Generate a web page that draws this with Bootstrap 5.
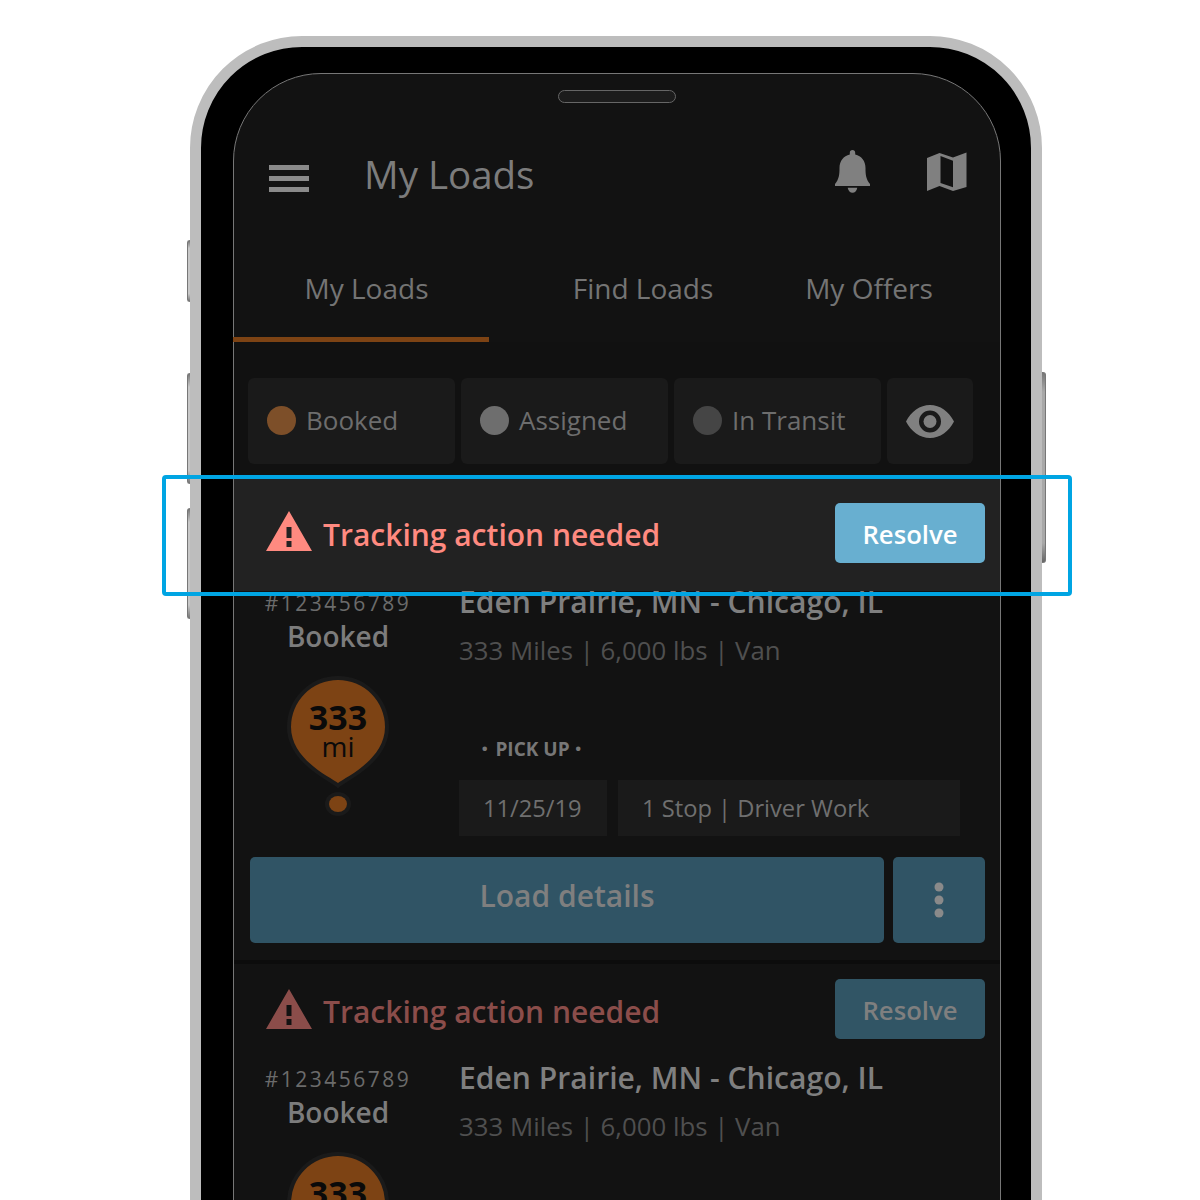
<!DOCTYPE html>
<html lang="en">
<head>
    <meta charset="UTF-8">
    <meta name="viewport" content="width=device-width, initial-scale=1.0">
    <title>My Loads</title>
    <link href="https://cdn.jsdelivr.net/npm/bootstrap@5.3.0/dist/css/bootstrap.min.css" rel="stylesheet">
    <style>
        html, body {
            height: 1200px;
            overflow: hidden;
            background: #fff;
        }
        body {
            font-family: "Open Sans", "Liberation Sans", sans-serif;
        }
        .stage {
            position: relative;
            width: 1200px;
            height: 1200px;
            overflow: hidden;
            padding: 36px 158px 0 190px;
        }
        /* side buttons of the phone */
        .side-key {
            position: absolute;
            width: 4px;
            border: 1px solid #777;
        }
        .key-a, .key-b, .key-c {
            left: 187px;
            border-right: 0;
            border-radius: 3px 0 0 3px;
            background: linear-gradient(180deg, #777, #c8c8c8 12%, #c8c8c8 88%, #777);
        }
        .key-a { top: 240px; height: 62px; }
        .key-b { top: 373px; height: 111px; }
        .key-c { top: 508px; height: 111px; }
        .key-d {
            left: 1041px;
            top: 372px;
            width: 5px;
            height: 191px;
            border-left: 0;
            border-radius: 0 3px 3px 0;
            background: linear-gradient(180deg, #777, #a8a8a8 10%, #a8a8a8 90%, #666);
        }

        .phone-shell {
            position: relative;
            height: 1300px;
            background: #000;
            border: 11px solid #bdbdbd;
            border-radius: 112px 112px 0 0;
            padding: 26px 30px 0 32px;
        }
        .phone-screen {
            height: 1300px;
            background: #121212;
            border: 1px solid #777;
            border-radius: 88px 88px 0 0;
        }
        .speaker {
            width: 118px;
            height: 13px;
            margin-top: 16px;
            background: #1c1c1c;
            border: 1px solid #666;
            border-radius: 7px;
        }
        .top-bar {
            height: 92px;
            margin-top: 27px;
            padding: 0 33px 0 35px;
        }
        .page-title {
            margin: 0 0 4px 55px;
            font-size: 38.5px;
            font-weight: 400;
            color: #7c7c7c;
        }
        .menu-icon { margin-top: 5px; }
        .bell-icon { margin: 0 57px 10px 0; }
        .map-icon { margin-bottom: 8px; }

        .tab-row {
            height: 120px;
            padding-top: 15px;
        }
        .tab-row .nav-link {
            height: 105px;
            padding: 32px 0 0;
            text-align: center;
            font-size: 28px;
            line-height: 38px;
            color: #747474;
            border-bottom: 5px solid transparent;
        }
        .tab-row .tab-one {
            width: 256px;
            margin-left: -1px;
            padding-left: 11px;
            border-bottom-color: #7d4314;
        }
        .tab-two { width: 308px; }
        .tab-three { width: 144px; white-space: nowrap; }

        .filter-row {
            gap: 6px;
            padding: 36px 0 23px 14px;
            background: #111;
        }
        .filter-chip {
            width: 207px;
            height: 86px;
            padding: 0 0 2px 19px;
            gap: 10px;
            font-size: 26px;
            color: #6d6d6d;
            background: #1a1a1a;
            border-radius: 6px;
        }
        .eye-chip {
            width: 86px;
            padding: 0;
        }
        .status-dot {
            width: 29px;
            height: 29px;
            border-radius: 50%;
        }
        .dot-booked { background: #7d4f29; }
        .dot-assigned { background: #6e6e6e; }
        .dot-transit { background: #454545; }

        .load-card {
            padding: 15px 15px 17px 14px;
            border-bottom: 4px solid #0c0c0c;
            background: #121212;
        }
        .tracking-row {
            height: 60px;
            margin-bottom: 17px;
            padding-left: 18px;
        }
        .tracking-text {
            margin-left: 11px;
            padding-top: 5px;
            font-size: 30px;
            font-weight: 600;
            color: #8b4d4a;
        }
        .tracking-icon { fill: #8b4d4a; }
        .resolve-btn {
            width: 150px;
            height: 60px;
            padding: 4px 0 0;
            font-size: 25.7px;
            font-weight: 600;
            color: #7f7f7f;
            background: #315565;
            border: 0;
            border-radius: 5px;
        }

        /* the highlighted copy of the row lies over the card below it */
        .tracking-lit {
            position: relative;
            z-index: 2;
            height: 112px;
            margin: -23px -15px -11px -14px;
            padding: 0 15px 4px 32px;
            background: #222;
        }
        .tracking-lit .tracking-text { padding-top: 2px; color: #ff8a80; }
        .tracking-lit .tracking-icon { fill: #ff8a80; margin-top: -5px; }
        .tracking-lit .resolve-btn { color: #fff; background: #68afd0; }
        .highlight-box {
            position: absolute;
            left: -72px;
            right: -72px;
            top: -4px;
            bottom: -5px;
            border: 4px solid #00a5e3;
            border-radius: 4px;
        }

        .left-col {
            width: 180px;
            flex: none;
            padding-top: 2px;
            text-align: center;
        }
        .load-number {
            font-size: 21px;
            line-height: 42px;
            letter-spacing: 2.5px;
            color: #6b6b6b;
        }
        .load-status {
            margin-top: -6px;
            font-size: 28px;
            line-height: 36px;
            font-weight: 600;
            color: #7c7c7c;
        }
        .pin-wrap {
            position: relative;
            width: 104px;
            height: 142px;
            margin: 21px auto 0;
        }
        .pin-text {
            position: absolute;
            left: 0;
            right: 0;
            top: 26px;
            color: #0a0a0a;
        }
        .pin-miles {
            font-size: 34px;
            line-height: 32px;
            font-weight: 700;
        }
        .pin-unit {
            font-size: 28px;
            line-height: 26px;
        }
        .main-col {
            flex: 1;
            margin-left: 31px;
            padding-top: 1px;
        }
        .route-name {
            font-size: 30.1px;
            line-height: 42px;
            font-weight: 600;
            color: #7f7f7f;
        }
        .route-meta {
            margin-top: 9px;
            font-size: 25.8px;
            line-height: 36px;
            color: #4f4f4f;
        }
        .pick-label {
            margin: 68px 0 18px 22px;
            font-size: 19px;
            line-height: 26px;
            font-weight: 700;
            color: #777;
        }
        .pick-dot {
            margin: 0 7px 0 0;
            font-size: 26px;
            line-height: 0;
            vertical-align: -2px;
        }
        .pick-dot-end { margin: 0 0 0 5px; }
        .pick-chips { gap: 11px; }
        .info-chip {
            height: 56px;
            line-height: 56px;
            padding-left: 24px;
            font-size: 23.7px;
            color: #6f6f6f;
            background: #1a1a1a;
        }
        .chip-date { width: 148px; }
        .chip-stops { width: 342px; }
        .action-row {
            gap: 9px;
            margin: 21px 0 0 2px;
        }
        .details-btn {
            width: 634px;
            height: 86px;
            padding: 0 0 9px;
            font-size: 30px;
            font-weight: 600;
            color: #7f7f7f;
            background: #305465;
            border: 0;
            border-radius: 5px;
        }
        .more-btn {
            width: 92px;
            height: 86px;
            padding: 0;
            background: #305465;
            border: 0;
            border-radius: 5px;
        }
    </style>
</head>
<body>
    <div class="stage">
        <span class="side-key key-a"></span>
        <span class="side-key key-b"></span>
        <span class="side-key key-c"></span>
        <span class="side-key key-d"></span>

        <div class="phone-shell">
            <div class="phone-screen">
                <div class="d-flex justify-content-center">
                    <div class="speaker"></div>
                </div>

                <!-- header -->
                <div class="top-bar d-flex align-items-center">
                    <svg class="menu-icon" width="40" height="27" viewBox="0 0 40 27" fill="#8a8a8a">
                        <rect y="0" width="40" height="5"/>
                        <rect y="11" width="40" height="5"/>
                        <rect y="22" width="40" height="5"/>
                    </svg>
                    <h1 class="page-title flex-grow-1">My Loads</h1>
                    <svg class="bell-icon" width="35" height="43" viewBox="0 0 35 43" fill="#808080">
                        <path d="M17.500 0c1.600 0 2.700 1 2.700 2.700v1.800c6.300 1.500 10.300 6.500 10.300 13.500 0 7 .5 11 4.500 16v2H0v-2c4-5 4.500-9 4.500-16 0-7 4-12 10.300-13.500V2.700C14.800 1 15.900 0 17.500 0z"/>
                        <path d="M12.700 37.700h9.600c-.5 3-2.500 5-4.800 5s-4.300-2-4.800-5z"/>
                    </svg>
                    <svg class="map-icon" width="40" height="40" viewBox="0 0 40 40" fill="#808080">
                        <path fill-rule="evenodd" d="M0 6 12.500 1 26 5.500 39.500.5V35L26 39 12.500 34 0 39zM13.500 4v27L26 35.300V8.700z"/>
                    </svg>
                </div>

                <!-- tabs -->
                <nav class="nav tab-row">
                    <a class="nav-link tab-one">My Loads</a>
                    <a class="nav-link tab-two">Find Loads</a>
                    <a class="nav-link tab-three">My Offers</a>
                </nav>

                <!-- status filters -->
                <div class="filter-row d-flex">
                    <div class="filter-chip d-flex align-items-center"><span class="status-dot dot-booked"></span>Booked</div>
                    <div class="filter-chip d-flex align-items-center"><span class="status-dot dot-assigned"></span>Assigned</div>
                    <div class="filter-chip d-flex align-items-center"><span class="status-dot dot-transit"></span>In Transit</div>
                    <div class="filter-chip eye-chip d-flex align-items-center justify-content-center">
                        <svg width="48" height="33" viewBox="0 0 48 33" fill="#808080">
                            <path fill-rule="evenodd" d="M24 0c10 0 19 6.500 24 16.500C43 26.500 34 33 24 33S5 26.500 0 16.500C5 6.500 14 0 24 0zm0 5.500a11 11 0 1 0 0 22 11 11 0 0 0 0-22z"/>
                            <circle cx="24" cy="16.500" r="6.500"/>
                        </svg>
                    </div>
                </div>

                <!-- first load -->
                <div class="load-card">
                    <div class="tracking-lit d-flex align-items-center">
                        <svg class="tracking-icon" width="46" height="40" viewBox="0 0 46 40">
                            <path fill-rule="evenodd" d="M23 0 46 40H0zM20.500 16v11h5V16zm0 14v6h5v-6z"/>
                        </svg>
                        <span class="tracking-text flex-grow-1">Tracking action needed</span>
                        <button type="button" class="btn resolve-btn">Resolve</button>
                        <div class="highlight-box"></div>
                    </div>
                    <div class="d-flex">
                        <div class="left-col">
                            <div class="load-number">#123456789</div>
                            <div class="load-status">Booked</div>
                            <div class="pin-wrap">
                                <svg width="104" height="142" viewBox="0 0 104 142">
                                    <path d="M52 108C46 103 5 85 5 52a47 47 0 0 1 94 0c0 33-41 51-47 56z" fill="#7d4314" stroke="#1a1a1a" stroke-width="8" paint-order="stroke"/>
                                    <ellipse cx="52" cy="129" rx="13" ry="12" fill="#1a1a1a"/>
                                    <ellipse cx="52" cy="129" rx="9" ry="8" fill="#7d4314"/>
                                </svg>
                                <div class="pin-text">
                                    <div class="pin-miles">333</div>
                                    <div class="pin-unit">mi</div>
                                </div>
                            </div>
                        </div>
                        <div class="main-col">
                            <div class="route-name">Eden Prairie, MN - Chicago, IL</div>
                            <div class="route-meta">333 Miles | 6,000 lbs | Van</div>
                            <div class="pick-label"><span class="pick-dot">·</span>PICK UP<span class="pick-dot pick-dot-end">·</span></div>
                            <div class="pick-chips d-flex">
                                <div class="info-chip chip-date">11/25/19</div>
                                <div class="info-chip chip-stops">1 Stop | Driver Work</div>
                            </div>
                        </div>
                    </div>
                    <div class="action-row d-flex">
                        <button type="button" class="btn details-btn">Load details</button>
                        <button type="button" class="btn more-btn">
                            <svg width="10" height="36" viewBox="0 0 10 36" fill="#8a8a8a">
                                <circle cx="5" cy="5" r="4.500"/>
                                <circle cx="5" cy="18" r="4.500"/>
                                <circle cx="5" cy="31" r="4.500"/>
                            </svg>
                        </button>
                    </div>
                </div>

                <!-- second load, cut off by the bottom of the picture -->
                <div class="load-card">
                    <div class="tracking-row d-flex align-items-center">
                        <svg class="tracking-icon" width="46" height="40" viewBox="0 0 46 40">
                            <path fill-rule="evenodd" d="M23 0 46 40H0zM20.500 16v11h5V16zm0 14v6h5v-6z"/>
                        </svg>
                        <span class="tracking-text flex-grow-1">Tracking action needed</span>
                        <button type="button" class="btn resolve-btn">Resolve</button>
                    </div>
                    <div class="d-flex">
                        <div class="left-col">
                            <div class="load-number">#123456789</div>
                            <div class="load-status">Booked</div>
                            <div class="pin-wrap">
                                <svg width="104" height="142" viewBox="0 0 104 142">
                                    <path d="M52 108C46 103 5 85 5 52a47 47 0 0 1 94 0c0 33-41 51-47 56z" fill="#7d4314" stroke="#1a1a1a" stroke-width="8" paint-order="stroke"/>
                                </svg>
                                <div class="pin-text">
                                    <div class="pin-miles">333</div>
                                </div>
                            </div>
                        </div>
                        <div class="main-col">
                            <div class="route-name">Eden Prairie, MN - Chicago, IL</div>
                            <div class="route-meta">333 Miles | 6,000 lbs | Van</div>
                        </div>
                    </div>
                </div>
            </div>
        </div>
    </div>

    <script src="https://cdn.jsdelivr.net/npm/bootstrap@5.3.0/dist/js/bootstrap.bundle.min.js"></script>
</body>
</html>
